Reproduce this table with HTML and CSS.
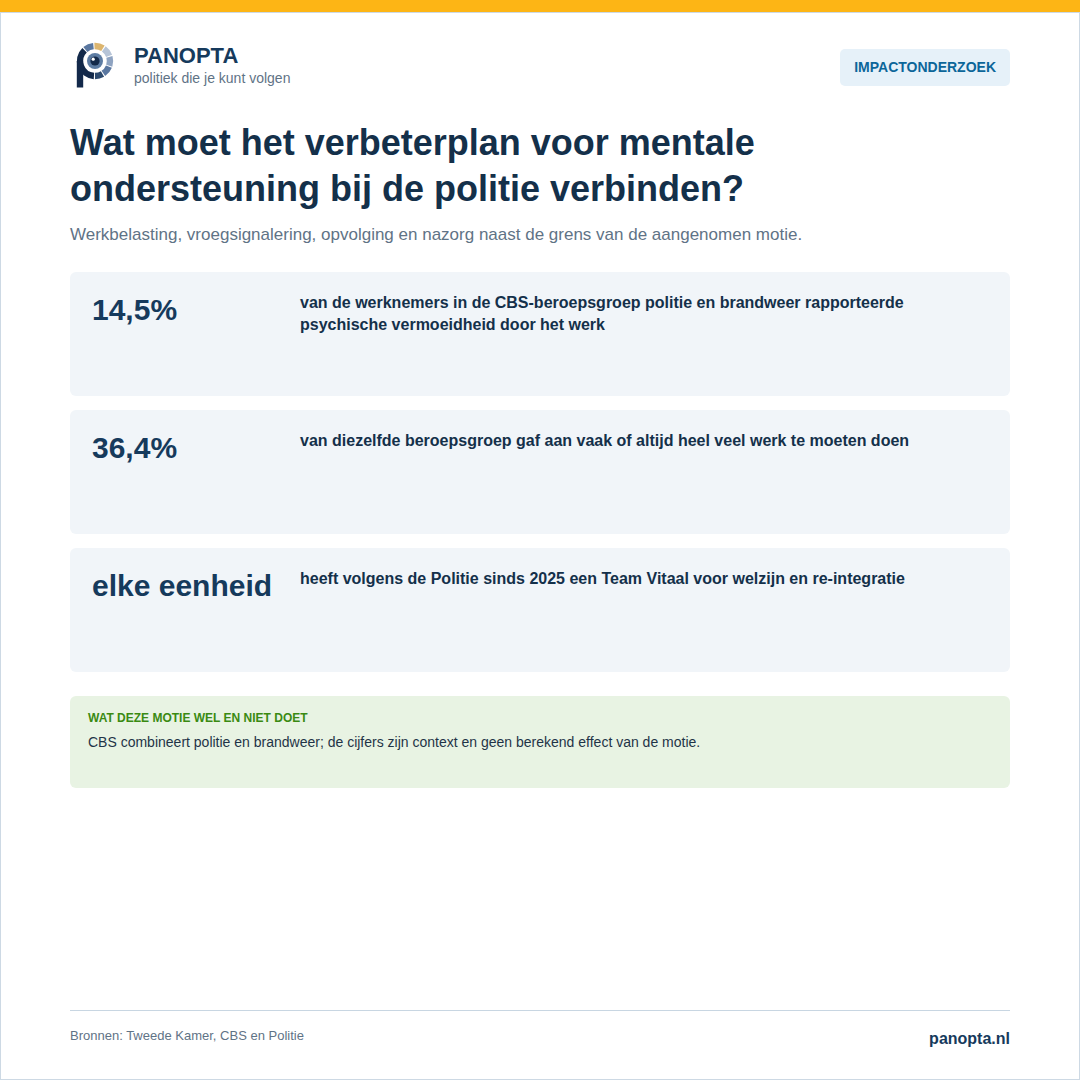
FILE: index.html
```html
<!DOCTYPE html>
<html lang="nl">
<head>
<meta charset="utf-8">
<title>Panopta</title>
<link rel="stylesheet" href="styles.css">
</head>
<body>
<div class="page">
  <div class="topbar"></div>
  <div class="frame">
    <header class="header">
      <div class="brand">
        <svg class="logo" width="42" height="48" viewBox="0 0 42 48" aria-hidden="true">
          <g fill="none" stroke-width="6.4">
            <path d="M12.36 8.51 A15 15 0 0 1 20.43 5.08" stroke="#5a77a0"/>
            <path d="M21.48 5.01 A15 15 0 0 1 29.95 7.28" stroke="#dcb56e"/>
            <path d="M30.82 7.86 A15 15 0 0 1 36.10 14.87" stroke="#b6c4d7"/>
            <path d="M36.42 15.87 A15 15 0 0 1 36.27 24.64" stroke="#8ea3c1"/>
            <path d="M35.91 25.62 A15 15 0 0 1 30.39 32.44" stroke="#5a77a0"/>
            <path d="M29.5 32.99 A15 15 0 0 1 22 35" stroke="#2d4a6e"/>
            <path d="M20.95 34.96 A15 15 0 0 1 11.58 9.21" stroke="#13294a"/>
            <path d="M7 20 L7 46.5" stroke="#13294a"/>
          </g>
          <circle cx="22" cy="20" r="8" fill="#5d7ca3"/>
          <circle cx="22" cy="20" r="4.6" fill="#13294a"/>
          <circle cx="20.2" cy="18.2" r="1.6" fill="#ffffff"/>
        </svg>
        <div class="brand-text">
          <div class="brand-name">PANOPTA</div>
          <div class="brand-tag">politiek die je kunt volgen</div>
        </div>
      </div>
      <div class="badge">IMPACTONDERZOEK</div>
    </header>

    <h1 class="title">Wat moet het verbeterplan voor mentale ondersteuning bij de politie verbinden?</h1>
    <p class="lead">Werkbelasting, vroegsignalering, opvolging en nazorg naast de grens van de aangenomen motie.</p>

    <div class="cards">
      <div class="card">
        <div class="num">14,5%</div>
        <div class="desc">van de werknemers in de CBS-beroepsgroep politie en brandweer rapporteerde psychische vermoeidheid door het werk</div>
      </div>
      <div class="card">
        <div class="num">36,4%</div>
        <div class="desc">van diezelfde beroepsgroep gaf aan vaak of altijd heel veel werk te moeten doen</div>
      </div>
      <div class="card">
        <div class="num">elke eenheid</div>
        <div class="desc">heeft volgens de Politie sinds 2025 een Team Vitaal voor welzijn en re-integratie</div>
      </div>
    </div>

    <div class="note">
      <div class="note-label">WAT DEZE MOTIE WEL EN NIET DOET</div>
      <div class="note-text">CBS combineert politie en brandweer; de cijfers zijn context en geen berekend effect van de motie.</div>
    </div>

    <footer class="footer">
      <div class="sources">Bronnen: Tweede Kamer, CBS en Politie</div>
      <div class="site">panopta.nl</div>
    </footer>
  </div>
</div>
</body>
</html>
```

FILE: styles.css
```css
* { box-sizing: border-box; }
html, body { margin: 0; padding: 0; }
body {
  font-family: "Liberation Sans", Arial, sans-serif;
  background: #ffffff;
  color: #14304a;
}
.page {
  width: 1080px;
  height: 1080px;
  display: flex;
  flex-direction: column;
}
.topbar {
  height: 12px;
  background: #fdb515;
  flex: none;
}
.frame {
  flex: 1;
  border: 1px solid #cdd9e4;
  padding: 28px 69px 30px;
  display: flex;
  flex-direction: column;
}
.header {
  display: flex;
  justify-content: space-between;
  align-items: center;
}
.brand {
  display: flex;
  align-items: center;
  gap: 19px;
}
.logo { display: block; margin-left: 3px; }
.brand-name {
  font-size: 22px;
  font-weight: 700;
  color: #163a5c;
  line-height: 24px;
}
.brand-tag {
  font-size: 14px;
  color: #5f7386;
  line-height: 18px;
  margin-top: 1px;
}
.badge {
  background: #e6f1f9;
  color: #0c6699;
  font-size: 14px;
  font-weight: 700;
  padding: 11px 14px;
  border-radius: 5px;
  line-height: 15px;
  margin-top: 4px;
}
.title {
  margin: 31px 0 0;
  font-size: 36px;
  font-weight: 700;
  line-height: 46px;
  color: #14304a;
  max-width: 760px;
}
.lead {
  margin: 12px 0 0;
  font-size: 17px;
  line-height: 22px;
  color: #5f7386;
}
.cards {
  margin-top: 26px;
  display: flex;
  flex-direction: column;
  gap: 14px;
}
.card {
  background: #f1f5f9;
  border-radius: 6px;
  min-height: 124px;
  padding: 20px 22px;
  display: grid;
  grid-template-columns: 190px 1fr;
  gap: 18px;
  align-items: start;
}
.num {
  font-size: 30px;
  font-weight: 700;
  line-height: 36px;
  color: #163a5c;
  white-space: nowrap;
}
.desc {
  font-size: 16px;
  font-weight: 700;
  line-height: 22px;
  color: #14304a;
  max-width: 640px;
}
.note {
  margin-top: 24px;
  background: #e8f3e3;
  border-radius: 6px;
  min-height: 92px;
  padding: 14px 18px;
}
.note-label {
  font-size: 12px;
  font-weight: 700;
  line-height: 16px;
  color: #3a8a12;
}
.note-text {
  margin-top: 6px;
  font-size: 14px;
  line-height: 20px;
  color: #1f3347;
}
.footer {
  margin-top: auto;
  border-top: 1px solid #c8d6e2;
  padding-top: 17px;
  display: flex;
  justify-content: space-between;
  align-items: flex-start;
}
.sources {
  font-size: 13px;
  line-height: 16px;
  color: #5f7386;
}
.site {
  font-size: 16px;
  font-weight: 700;
  line-height: 20px;
  color: #163a5c;
  margin-top: 1px;
}
```
